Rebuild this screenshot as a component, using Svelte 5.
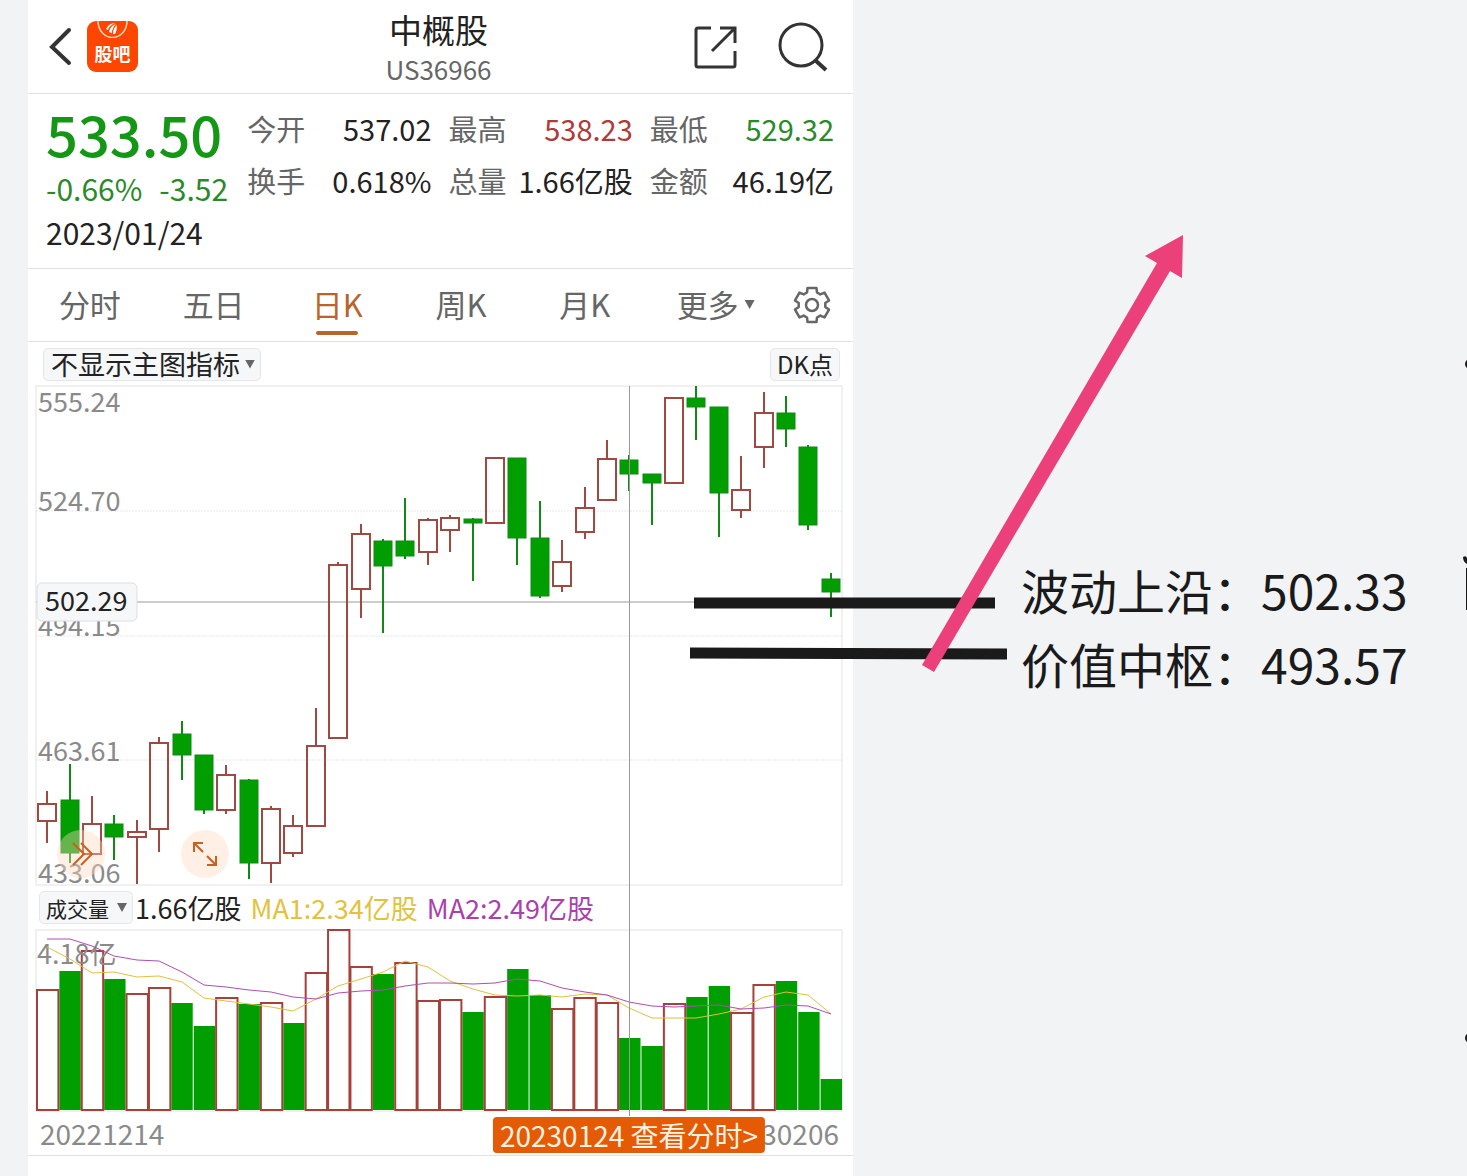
<script>
  const tabs = ['分时', '五日', '日K', '周K', '月K'];
  let activeTab = $state('日K');

  const stats = [
    { label: '今开', value: '537.02' },
    { label: '最高', value: '538.23', tone: 'up' },
    { label: '最低', value: '529.32', tone: 'down' },
    { label: '换手', value: '0.618%' },
    { label: '总量', value: '1.66亿股' },
    { label: '金额', value: '46.19亿' },
  ];

  const WIDTH = 806;
  const PRICE_HEIGHT = 499;
  const VOLUME_HEIGHT = 181;

  const axis = [
    { text: '555.24', y: 26 },
    { text: '524.70', y: 125, line: 125 },
    { text: '494.15', y: 250, line: 250 },
    { text: '463.61', y: 375, line: 374 },
    { text: '433.06', y: 497 },
  ];

  // [rising, high, body top, body bottom, low, volume rising, volume top]
  const candles = [
    [1, 405, 418, 435, 457, 1, 60],
    [0, 378, 414, 467, 477, 0, 41],
    [1, 410, 438, 468, 468, 1, 21],
    [0, 429, 438, 451, 474, 0, 49],
    [1, 434, 446, 451, 498, 1, 64],
    [1, 351, 357, 443, 466, 1, 58],
    [0, 335, 348, 369, 394, 0, 73],
    [0, 369, 369, 424, 428, 0, 96],
    [1, 379, 389, 424, 428, 1, 68],
    [0, 393, 394, 477, 493, 0, 74],
    [1, 420, 423, 477, 497, 1, 73],
    [1, 429, 440, 467, 471, 0, 93],
    [1, 322, 360, 440, 440, 1, 43],
    [1, 176, 179, 352, 352, 1, 0],
    [1, 138, 148, 203, 232, 1, 37],
    [0, 153, 155, 180, 247, 0, 44],
    [0, 112, 155, 170, 173, 1, 33],
    [1, 132, 134, 166, 179, 1, 71],
    [1, 129, 132, 144, 166, 1, 70],
    [0, 132, 133, 137, 195, 0, 82],
    [1, 71, 72, 137, 137, 1, 67],
    [0, 72, 72, 152, 179, 0, 39],
    [0, 115, 152, 210, 212, 0, 65],
    [1, 154, 176, 200, 206, 1, 79],
    [1, 101, 122, 146, 153, 1, 68],
    [1, 54, 73, 114, 114, 1, 73],
    [0, 69, 74, 88, 105, 0, 108],
    [0, 88, 88, 97, 139, 0, 116],
    [1, 11, 12, 97, 97, 1, 74],
    [0, 0, 12, 21, 54, 0, 67],
    [0, 21, 21, 107, 151, 0, 56],
    [1, 70, 104, 124, 132, 1, 83],
    [1, 6, 27, 61, 82, 1, 55],
    [0, 10, 27, 43, 61, 0, 51],
    [0, 59, 61, 139, 144, 0, 82],
    [0, 187, 193, 206, 231, 0, 149],
  ];

  const ma1 = [
    17, 29, 43, 42, 47, 46, 52, 68, 71, 74, 77, 81, 69, 56, 49, 42, 31, 37, 51, 59, 65, 66, 65, 67, 64, 65, 78, 88, 88,
    88, 84, 79, 67, 62, 65, 84,
  ];
  const ma2 = [
    9, 9, 16, 26, 30, 31, 42, 55, 57, 60, 62, 67, 69, 63, 61, 60, 56, 53, 53, 54, 53, 49, 51, 58, 62, 65, 72, 76, 77, 76,
    75, 79, 78, 75, 76, 84,
  ];

  const step = WIDTH / candles.length;
  const center = (i) => Math.round((i + 0.5) * step);
  const toPoints = (values) => values.map((y, i) => `${center(i)},${y}`).join(' ');

  const selected = 26;
  const crossX = (center(selected) / WIDTH) * 100;
</script>

<div class="page">
  <main>
    <header>
      <div class="left">
        <button aria-label="返回">
          <svg width="26" height="40" viewBox="0 0 26 40">
            <path d="M21 3 4 20l17 16" fill="none" stroke="#333" stroke-width="4" stroke-linecap="round" />
          </svg>
        </button>
        <a class="logo" href="#guba">
          <svg width="51" height="17" viewBox="0 0 51 17" aria-hidden="true">
            <path d="M11 0a14 16 0 0 0 29 0" fill="none" stroke="#ffd9c4" stroke-width="1.5" />
            <path d="M19 8q3-6 9-6-6 3-7 7zM22 11q1-6 7-8-4 4-4 9zM26 13q0-6 4-9 0 6-2 9z" fill="#fff" />
          </svg>
          <span>股吧</span>
        </a>
      </div>
      <div class="title">
        <h1>中概股</h1>
        <p>US36966</p>
      </div>
      <div class="right">
        <button aria-label="分享">
          <svg width="44" height="44" viewBox="0 0 44 44" fill="none" stroke="#333" stroke-width="3">
            <path d="M18 3H5q-2 0-2 2v35q0 2 2 2h35q2 0 2-2V26M27 3h15v15M19 26 41 4" />
          </svg>
        </button>
        <button aria-label="搜索">
          <svg width="52" height="52" viewBox="0 0 52 52" fill="none" stroke="#333" stroke-width="3">
            <circle cx="24" cy="24" r="21" />
            <path d="m38 39 11 10" stroke-width="4" />
          </svg>
        </button>
      </div>
    </header>

    <section class="quote">
      <div class="price">
        <strong>533.50</strong>
        <div class="change"><span>-0.66%</span><span>-3.52</span></div>
        <time datetime="2023-01-24">2023/01/24</time>
      </div>
      <dl>
        {#each stats as stat}
          <div>
            <dt>{stat.label}</dt>
            <dd class={stat.tone}>{stat.value}</dd>
          </div>
        {/each}
      </dl>
    </section>

    <nav>
      {#each tabs as tab}
        <button class="tab" class:active={tab === activeTab} onclick={() => (activeTab = tab)}>{tab}</button>
      {/each}
      <button class="tab more">更多<i class="caret"></i></button>
      <button class="gear" aria-label="设置">
        <svg width="40" height="40" viewBox="-20 -20 40 40" fill="none" stroke="#666" stroke-width="2.5">
          <path
            d="M-4.500-17h9l.500 4.500 3.300 1.900 4.200-1.800L17-4.600l-3.700 2.700v3.800L17 4.600l-4.500 7.800-4.200-1.800L5 12.500 4.500 17h-9L-5 12.500l-3.300-1.900-4.200 1.800L-17 4.600l3.700-2.700v-3.800L-17-4.600l4.500-7.800 4.200 1.800L-5-12.500z"
            stroke-linejoin="round"
          />
          <circle r="6" />
        </svg>
      </button>
    </nav>

    <div class="toolbar">
      <span class="picker main-picker">
        <select aria-label="主图指标"><option>不显示主图指标</option></select>
        <i class="caret"></i>
      </span>
      <button class="dk">DK点</button>
    </div>

    <section class="charts">
      <div class="plot">
        <svg viewBox="0 0 {WIDTH} {PRICE_HEIGHT}" role="img" aria-label="日K">
          {#each axis as tick}
            {#if tick.line}
              <line class="grid" x1="0" x2={WIDTH} y1={tick.line} y2={tick.line} />
            {/if}
          {/each}
          <rect class="frame" x="0" y="0" width={WIDTH} height={PRICE_HEIGHT} />
          {#each axis as tick}
            <text class="tick" x="2" y={tick.y}>{tick.text}</text>
          {/each}
          <line class="cross" x1="0" x2={WIDTH} y1="216" y2="216" />
          {#each candles as [up, high, top, bottom, low], i}
            <g class={up ? 'rise' : 'fall'}>
              <line x1={center(i)} x2={center(i)} y1={high} y2={top} />
              <line x1={center(i)} x2={center(i)} y1={bottom} y2={low} />
              <rect x={center(i) - 9} y={top} width="18" height={bottom - top} />
            </g>
          {/each}
          <rect class="badge" x="1" y="197" width="100" height="38" rx="5" />
          <text class="badge-text" x="9" y="225">502.29</text>
        </svg>
        <button class="round collapse" aria-label="展开">
          <svg width="48" height="48" viewBox="0 0 48 48">
            <path d="m16 13 11 11-11 11M24 13l11 11-11 11" />
          </svg>
        </button>
        <button class="round expand" aria-label="全屏">
          <svg width="48" height="48" viewBox="0 0 48 48">
            <path d="M13 22v-9h9M13 13l9 9M35 26v9h-9M35 35l-9-9" />
          </svg>
        </button>
      </div>

      <div class="legend">
        <span class="picker volume-picker">
          <select aria-label="副图指标"><option>成交量</option></select>
          <i class="caret"></i>
        </span>
        <span>1.66亿股</span>
        <span class="ma1">MA1:2.34亿股</span>
        <span class="ma2">MA2:2.49亿股</span>
      </div>

      <div class="plot">
        <svg viewBox="0 0 {WIDTH} {VOLUME_HEIGHT}" role="img" aria-label="成交量">
          <rect class="frame" x="0" y="0" width={WIDTH} height={VOLUME_HEIGHT} />
          {#each candles as candle, i}
            <rect
              class={candle[5] ? 'bar-rise' : 'bar-fall'}
              x={i * step + 1}
              y={candle[6]}
              width={step - 1}
              height={180 - candle[6]}
            />
          {/each}
          <text class="tick" x="1" y="34">4.18亿</text>
          <polyline class="line1" points={toPoints(ma1)} />
          <polyline class="line2" points={toPoints(ma2)} />
        </svg>
      </div>
      <div class="cross-v" style="left: {crossX}%"></div>

      <div class="dates">
        <span>20221214</span>
        <span>20230206</span>
        <button class="jump" style="left: {crossX}%">20230124 查看分时&gt;</button>
      </div>
    </section>
  </main>

  <aside>
    <p>波动上沿：502.33</p>
    <p>价值中枢：493.57</p>
  </aside>

  <svg class="ink" viewBox="0 0 1467 1176" aria-hidden="true">
    <path d="M694 603H995M690 653 1007 654" stroke="#1a1a1a" stroke-width="11" />
    <path d="M922 665 1157 263 1145 256 1183 235 1182 278 1170 271 934 672z" fill="#ec407a" />
    <g fill="#1a1a1a">
      <circle cx="1470" cy="364" r="5" />
      <path d="M1463 557q3-2 4 1v6q-4-2-4-7zM1466 568h1v42h-1z" />
      <circle cx="1470" cy="1038" r="5" />
    </g>
  </svg>
</div>

<style>
  :global(body) {
    margin: 0;
    background: #f1f3f5;
  }

  .page {
    position: relative;
    display: grid;
    grid-template-columns: minmax(0, 825fr) minmax(0, 614fr);
    box-sizing: border-box;
    min-height: 100vh;
    padding-left: 28px;
    overflow: hidden;
    font-family: 'Noto Sans CJK SC', 'Noto Sans', sans-serif;
    color: #222;
  }

  main {
    background: #fff;
  }

  button,
  select {
    margin: 0;
    padding: 0;
    border: 0;
    background: none;
    color: inherit;
    font: inherit;
    cursor: pointer;
  }

  svg {
    display: block;
  }

  h1,
  p,
  dl,
  dd {
    margin: 0;
  }

  header {
    display: grid;
    grid-template-columns: 1fr auto 1fr;
    align-items: center;
    height: 93px;
    padding: 0 24px 0 20px;
    border-bottom: 1px solid #e2e2e2;
  }

  .left,
  .right {
    display: flex;
    align-items: center;
    gap: 13px;
  }

  .right {
    justify-content: flex-end;
    gap: 40px;
  }

  .logo {
    width: 51px;
    height: 51px;
    border-radius: 9px;
    background: #fe4600;
    color: #fff;
    font-size: 18px;
    font-weight: 700;
    line-height: 30px;
    text-align: center;
    text-decoration: none;
  }

  .title {
    text-align: center;
  }

  h1 {
    font-size: 33px;
    font-weight: 400;
    line-height: 44px;
  }

  .title p {
    color: #666;
    font-size: 26px;
    line-height: 36px;
  }

  .quote {
    display: grid;
    grid-template-columns: repeat(4, minmax(0, 1fr));
    column-gap: 17px;
    height: 174px;
    padding: 0 19px 0 18px;
    border-bottom: 1px solid #e2e2e2;
  }

  .price {
    padding-top: 6px;
    font-size: 30px;
    line-height: 44px;
    white-space: nowrap;
  }

  .price strong {
    display: block;
    color: #149714;
    font-size: 56px;
    font-weight: 500;
    line-height: 66px;
  }

  .change {
    display: flex;
    gap: 17px;
    color: #2a8a2a;
  }

  dl {
    display: grid;
    grid-column: span 3;
    grid-template-columns: repeat(3, minmax(0, 1fr));
    grid-auto-rows: 52px;
    column-gap: 17px;
    padding-top: 8px;
    font-size: 29px;
    line-height: 52px;
  }

  dl div {
    display: flex;
    justify-content: space-between;
    white-space: nowrap;
  }

  dt {
    color: #666;
  }

  .up {
    color: #b03a3a;
  }

  .down {
    color: #2a8a2a;
  }

  nav {
    display: grid;
    grid-template-columns: repeat(6, 3fr) 2fr;
    height: 72px;
    border-bottom: 1px solid #e2e2e2;
  }

  .tab {
    position: relative;
    padding-bottom: 2px;
    color: #666;
    font-size: 31px;
    line-height: 70px;
    white-space: nowrap;
  }

  .tab.active {
    color: #b9642a;
  }

  .tab.active::after {
    position: absolute;
    bottom: 6px;
    left: 50%;
    width: 42px;
    height: 4px;
    border-radius: 2px;
    background: #b9642a;
    content: '';
    transform: translateX(-50%);
  }

  .caret {
    display: inline-block;
    width: 10px;
    height: 9px;
    background: #666;
    clip-path: polygon(0 0, 100% 0, 50% 100%);
  }

  .tab.more {
    padding-left: 14px;
  }

  .more .caret {
    margin-left: 6px;
    vertical-align: 8px;
  }

  .gear {
    display: grid;
    place-items: center;
  }

  .toolbar {
    display: flex;
    align-items: center;
    justify-content: space-between;
    height: 44px;
    padding: 0 13px 0 15px;
  }

  .picker {
    position: relative;
    display: inline-flex;
  }

  .picker select,
  .dk {
    box-sizing: border-box;
    height: 33px;
    border: 1px solid #e4e6ea;
    border-radius: 5px;
    background: #f5f7f9;
    line-height: 30px;
    appearance: none;
  }

  .picker .caret {
    position: absolute;
    top: 12px;
    right: 6px;
    pointer-events: none;
  }

  .main-picker select {
    padding: 0 20px 0 7px;
    font-size: 27px;
  }

  .volume-picker select {
    padding: 0 23px 0 6px;
    font-size: 21px;
  }

  .dk {
    padding: 0 6px;
    font-size: 24px;
  }

  .charts {
    position: relative;
    margin: 0 11px 0 8px;
  }

  .plot {
    position: relative;
  }

  .plot > svg {
    width: 100%;
    overflow: visible;
  }

  .frame {
    fill: none;
    stroke: #e2e2e2;
  }

  .grid {
    stroke: #e8e8e8;
    stroke-dasharray: 2 1;
  }

  .tick {
    fill: #8a8a8a;
    font-size: 27px;
  }

  .cross {
    stroke: #999;
  }

  .rise line,
  .rise rect {
    fill: none;
    stroke: #a04842;
    stroke-width: 2;
  }

  .fall line,
  .fall rect {
    fill: #009e00;
    stroke: #0f8a14;
    stroke-width: 2;
  }

  .fall rect {
    stroke-width: 1;
  }

  .badge {
    fill: #f5f7f9;
    stroke: #dcdfe3;
  }

  .badge-text {
    fill: #222;
    font-size: 27px;
  }

  .round {
    position: absolute;
    bottom: 7px;
    border-radius: 50%;
    background: rgba(255, 214, 190, 0.4);
  }

  .round path {
    fill: none;
    stroke: #cc5f1c;
    stroke-width: 2;
  }

  .collapse {
    left: 21px;
  }

  .expand {
    left: 145px;
  }

  .legend {
    display: flex;
    align-items: center;
    gap: 9px;
    height: 45px;
    padding-left: 3px;
    font-size: 27px;
    line-height: 44px;
    white-space: nowrap;
  }

  .legend .picker {
    margin-right: -7px;
  }

  .ma1 {
    color: #e2c240;
  }

  .ma2 {
    color: #ac3fac;
  }

  .bar-rise {
    fill: #fff;
    stroke: #a8403a;
    stroke-width: 2;
  }

  .bar-fall {
    fill: #009e00;
  }

  .line1,
  .line2 {
    fill: none;
    stroke: #e0c03c;
    stroke-width: 1;
  }

  .line2 {
    stroke: #b04db0;
  }

  .cross-v {
    position: absolute;
    top: 0;
    bottom: 40px;
    width: 1px;
    background: #999;
    pointer-events: none;
  }

  .dates {
    position: relative;
    display: flex;
    justify-content: space-between;
    height: 45px;
    padding: 0 3px 0 4px;
    color: #8a8a8a;
    font-size: 28px;
    line-height: 44px;
  }

  .dates::after {
    position: absolute;
    right: -11px;
    bottom: 0;
    left: -8px;
    border-bottom: 1px solid #e2e2e2;
    content: '';
  }

  .jump {
    position: absolute;
    top: 6px;
    padding: 0 7px;
    border-radius: 4px;
    background: #e55a05;
    color: #fff3e2;
    line-height: 36px;
    white-space: nowrap;
    transform: translateX(-50%);
  }

  aside {
    padding: 552px 0 0 168px;
    color: #1a1a1a;
    font-size: 48px;
    line-height: 74px;
    white-space: nowrap;
  }

  .ink {
    position: absolute;
    top: 0;
    left: 0;
    width: 100%;
    pointer-events: none;
  }
</style>
